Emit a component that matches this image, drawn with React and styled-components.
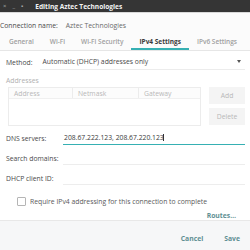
import styled, { createGlobalStyle } from "styled-components";

const GlobalStyle = createGlobalStyle`
  html, body {
    margin: 0;
    padding: 0;
    background: #ffffff;
  }
  body {
    font-family: "Open Sans", "Noto Sans", sans-serif;
    font-size: 6.8px;
    color: #4a4a4a;
  }
`;

const accent = "#36b0b3";

export default function App() {
  return (
    <>
      <GlobalStyle />
      <Window>
        <TitleBar>
          <Controls>
            <span>×</span>
            <span>_</span>
            <span>▪</span>
          </Controls>
          <Title>Editing Aztec Technologies</Title>
        </TitleBar>

        <Header>
          <NameRow>
            <Label>Connection name:</Label>
            <NameValue>Aztec Technologies</NameValue>
          </NameRow>
          <Tabs>
            <Tab>General</Tab>
            <Tab>Wi-Fi</Tab>
            <Tab>Wi-Fi Security</Tab>
            <Tab $active>IPv4 Settings</Tab>
            <Tab>IPv6 Settings</Tab>
          </Tabs>
        </Header>

        <Body>
          <MethodRow>
            <Label>Method:</Label>
            <Combo>
              <span>Automatic (DHCP) addresses only</span>
              <Arrow />
            </Combo>
          </MethodRow>

          <SectionLabel>Addresses</SectionLabel>
          <AddressArea>
            <Table>
              <HeadRow>
                <HeadCell>Address</HeadCell>
                <HeadCell>Netmask</HeadCell>
                <HeadCell $last>Gateway</HeadCell>
              </HeadRow>
            </Table>
            <ButtonCol>
              <SideButton>Add</SideButton>
              <SideButton>Delete</SideButton>
            </ButtonCol>
          </AddressArea>

          <Fields>
            <Label>DNS servers:</Label>
            <Field $focus>
              208.67.222.123, 208.67.220.123<Caret />
            </Field>
            <Label>Search domains:</Label>
            <Field />
            <Label>DHCP client ID:</Label>
            <Field />
          </Fields>

          <CheckRow>
            <Box />
            <span>Require IPv4 addressing for this connection to complete</span>
          </CheckRow>

          <RoutesRow>
            <LinkButton>Routes…</LinkButton>
          </RoutesRow>
        </Body>

        <Footer>
          <LinkButton>Cancel</LinkButton>
          <LinkButton>Save</LinkButton>
        </Footer>
      </Window>
    </>
  );
}

const Window = styled.div`
  width: 250px;
  height: 250px;
  display: flex;
  flex-direction: column;
  overflow: hidden;
  background: #ffffff;
`;

const TitleBar = styled.div`
  height: 12px;
  flex: none;
  background: #353535;
  display: flex;
  align-items: center;
  gap: 12px;
  padding-left: 3px;
  border-bottom: 1px solid #d9d9d9;
`;

const Controls = styled.div`
  display: flex;
  gap: 6px;
  color: #a8a8a8;
  font-size: 6px;
  line-height: 1;
`;

const Title = styled.div`
  color: #f2f2f2;
  font-weight: 700;
  font-size: 6.6px;
`;

const Header = styled.div`
  flex: none;
  background: #fbfbfb;
  border-bottom: 1px solid #e6e6e6;
`;

const NameRow = styled.div`
  display: flex;
  align-items: center;
  height: 20px;
  padding-top: 2px;
`;

const Label = styled.div`
  color: #4a4a4a;
  white-space: nowrap;
`;

const NameValue = styled.div`
  margin-left: 8px;
  color: #6a6a6a;
`;

const Tabs = styled.div`
  display: flex;
  align-items: stretch;
  height: 15px;
  padding-left: 1px;
  font-size: 6.5px;
`;

const Tab = styled.div`
  padding: 0 8px;
  display: flex;
  align-items: center;
  color: ${({ $active }) => ($active ? "#3a3a3a" : "#a0a0a0")};
  font-weight: ${({ $active }) => ($active ? 700 : 600)};
  border-bottom: 2px solid ${({ $active }) => ($active ? accent : "transparent")};
  white-space: nowrap;
`;

const Body = styled.div`
  flex: 1;
  padding: 4px 5px 0 6px;
  display: flex;
  flex-direction: column;
`;

const MethodRow = styled.div`
  display: flex;
  align-items: center;
  gap: 7px;
  height: 14px;
`;

const Combo = styled.div`
  flex: 1;
  display: flex;
  align-items: center;
  justify-content: space-between;
  height: 100%;
  border-bottom: 1px solid #ececec;
  padding: 0 4px 0 3px;
  color: #4a4a4a;
`;

const Arrow = styled.div`
  width: 0;
  height: 0;
  border-left: 2.5px solid transparent;
  border-right: 2.5px solid transparent;
  border-top: 3px solid #555;
`;

const SectionLabel = styled.div`
  margin-top: 7px;
  color: #b0b0b0;
`;

const AddressArea = styled.div`
  display: flex;
  gap: 8px;
  margin-top: 2px;
  padding-left: 2px;
`;

const Table = styled.div`
  flex: 1;
  height: 37px;
  border: 1px solid #ececec;
  background: #ffffff;
`;

const HeadRow = styled.div`
  display: grid;
  grid-template-columns: 64px 66px 1fr;
  height: 10px;
  border-bottom: 1px solid #f0f0f0;
  background: #fcfcfc;
`;

const HeadCell = styled.div`
  padding-left: 5px;
  color: #b8b8b8;
  display: flex;
  align-items: center;
  border-right: ${({ $last }) => ($last ? "none" : "1px solid #ececec")};
`;

const ButtonCol = styled.div`
  width: 36px;
  display: flex;
  flex-direction: column;
  gap: 4px;
`;

const SideButton = styled.div`
  height: 17px;
  background: #f4f4f4;
  color: #b8b8b8;
  display: flex;
  align-items: center;
  justify-content: center;
`;

const Fields = styled.div`
  display: grid;
  grid-template-columns: 57px 1fr;
  grid-auto-rows: 20px;
  align-items: center;
  margin-top: 2px;
`;

const Field = styled.div`
  height: 12px;
  display: flex;
  align-items: center;
  padding-left: 1px;
  color: #3a3a3a;
  border-bottom: 1px solid ${({ $focus }) => ($focus ? accent : "#ededed")};
`;

const Caret = styled.span`
  display: inline-block;
  width: 1px;
  height: 7px;
  background: #333;
  margin-left: -1px;
`;

const CheckRow = styled.div`
  display: flex;
  align-items: center;
  gap: 4px;
  margin-top: 9px;
  padding-left: 11px;
  color: #5a5a5a;
`;

const Box = styled.div`
  width: 7px;
  height: 7px;
  border: 1px solid #b5b5b5;
  border-radius: 1px;
  background: #fff;
`;

const RoutesRow = styled.div`
  display: flex;
  justify-content: flex-end;
  margin-top: 5px;
  padding-right: 9px;
`;

const LinkButton = styled.div`
  color: #5f8f93;
  font-weight: 700;
`;

const Footer = styled.div`
  flex: none;
  height: 28px;
  background: #f6f7f8;
  border-top: 1px solid #e8e8e8;
  display: flex;
  align-items: center;
  justify-content: flex-end;
  gap: 21px;
  padding: 3px 10px 0 0;
`;
